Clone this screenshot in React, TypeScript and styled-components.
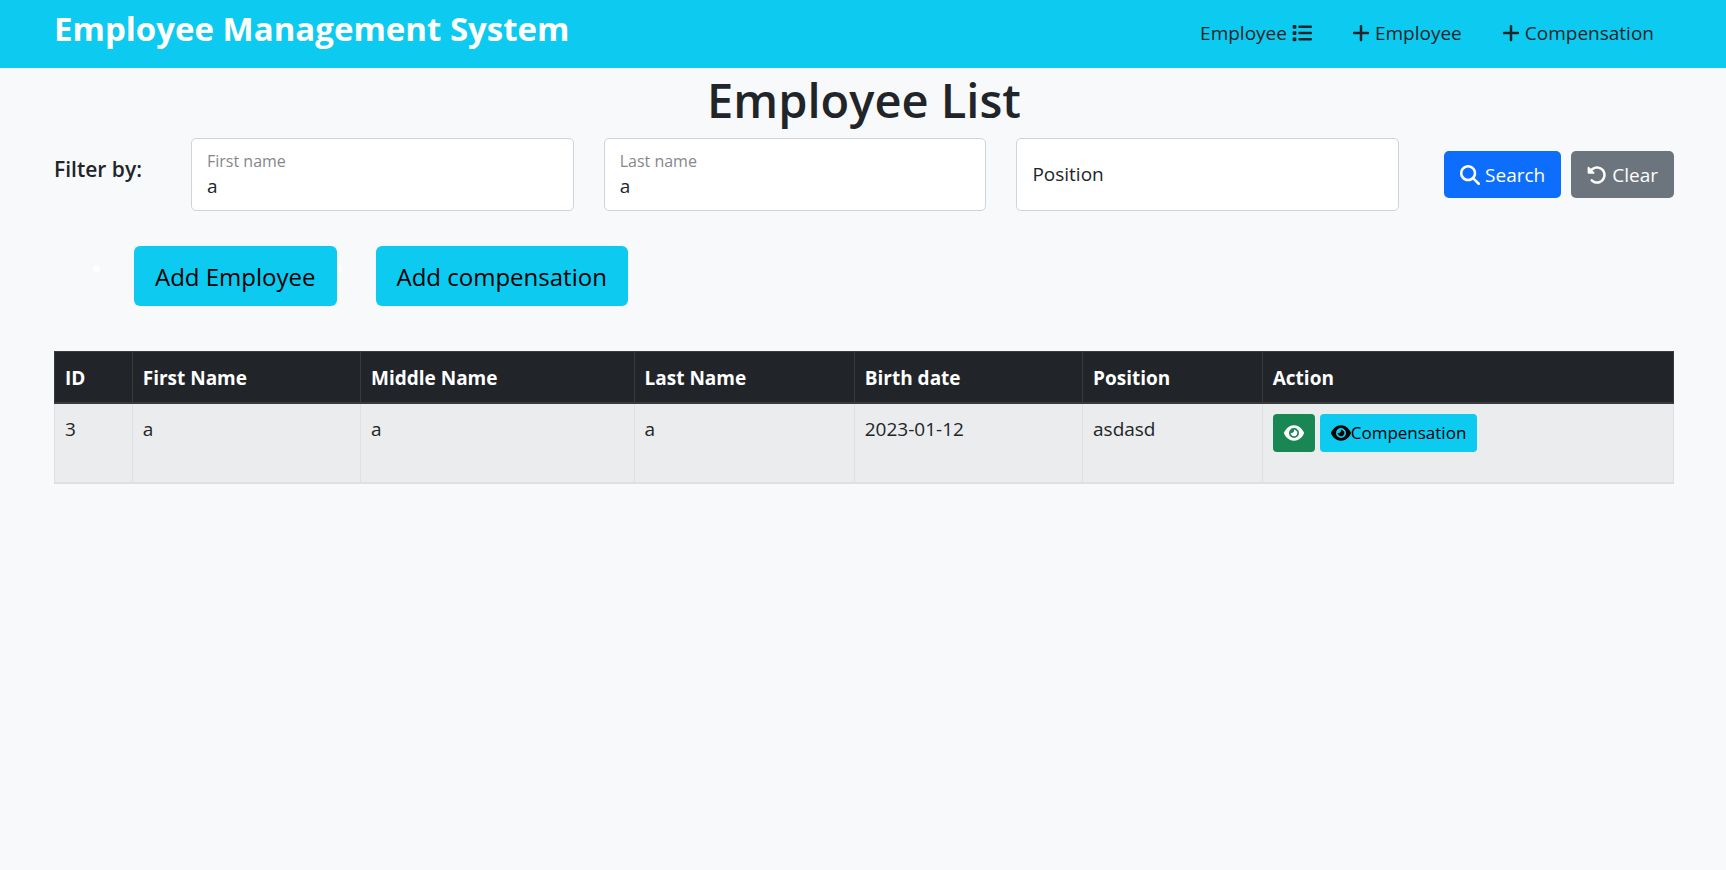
import React, { useState } from "react";
import styled, { createGlobalStyle, css } from "styled-components";
import { FaEye, FaList, FaMagnifyingGlass, FaPlus, FaRotateLeft } from "react-icons/fa6";

const GlobalStyle = createGlobalStyle`
  *, *::before, *::after { box-sizing: border-box; }
  body {
    margin: 0;
    background: #f8f9fb;
    color: #212529;
    font-family: "Segoe UI", "Open Sans", "Noto Sans", sans-serif;
    font-size: 19px;
    line-height: 30px;
  }
  button, input { font: inherit; }
`;

const Navbar = styled.header`
  display: flex;
  justify-content: space-between;
  align-items: flex-start;
  height: 68px;
  padding: 0 52px 0 54px;
  background: #0dcaf0;
`;

const Brand = styled.a`
  padding-top: 8px;
  color: #fff;
  font-size: 33px;
  font-weight: 700;
  line-height: 42px;
  text-decoration: none;
  white-space: nowrap;
`;

const NavLinks = styled.nav`
  display: flex;
  padding-top: 18px;
`;

const NavLink = styled.a`
  display: flex;
  align-items: center;
  gap: 5px;
  padding: 0 20px;
  color: #212529;
  text-decoration: none;
  white-space: nowrap;
`;

const PlusIcon = styled(FaPlus)`
  width: 18px;
  height: 20px;
`;

const Main = styled.main`
  padding: 0 52px 0 54px;
`;

const Title = styled.h1`
  margin: 0;
  padding: 2px 0 8px;
  font-size: 47px;
  font-weight: 600;
  line-height: 60px;
  text-align: center;
`;

const Filters = styled.form`
  display: flex;
  align-items: center;
`;

const FiltersHeading = styled.h2`
  flex: 0 0 137px;
  margin: 0;
  padding-bottom: 12px;
  font-size: 21px;
  font-weight: 600;
  line-height: 30px;
`;

const Fields = styled.div`
  display: flex;
  flex: 1;
  gap: 30px;
`;

const Field = styled.label`
  display: flex;
  flex: 1;
  flex-direction: column;
  justify-content: center;
  height: 73px;
  min-width: 0;
  padding: 0 15px 1px;
  background: #fff;
  border: 1px solid #ced4da;
  border-radius: 5px;
`;

const Caption = styled.span`
  color: #85888b;
  font-size: 16px;
  line-height: 24px;
`;

const Input = styled.input`
  width: 100%;
  height: 26px;
  padding: 0;
  background: transparent;
  border: 0;
  outline: 0;
  color: #212529;
  &::placeholder { color: #212529; opacity: 1; }
`;

const Actions = styled.div`
  display: flex;
  gap: 10px;
  padding-left: 45px;
`;

type Tone = "primary" | "secondary" | "success" | "info";

const tones: Record<Tone, ReturnType<typeof css>> = {
  primary: css`background: #0d6efd; color: #fff;`,
  secondary: css`background: #6c757d; color: #fff;`,
  success: css`background: #198754; color: #fff;`,
  info: css`background: #0dcaf0; color: #000;`,
};

const Button = styled.button<{ $tone: Tone }>`
  display: inline-flex;
  align-items: center;
  justify-content: center;
  gap: 5px;
  height: 47px;
  padding: 0 16px;
  border: 0;
  border-radius: 5px;
  cursor: pointer;
  white-space: nowrap;
  ${({ $tone }) => tones[$tone]}
`;

const SmallButton = styled(Button)`
  gap: 0;
  height: 38px;
  padding: 0 11px;
  border-radius: 4px;
  font-size: 17px;
`;

const LargeButton = styled(Button)`
  height: 60px;
  padding: 2px 21px 0;
  border-radius: 6px;
  font-size: 24px;
`;

const Shortcuts = styled.ul`
  display: flex;
  gap: 39px;
  margin: 0;
  padding: 35px 0 45px 80px;
  list-style: none;
`;

const Shortcut = styled.li`
  position: relative;
  &::before {
    content: "";
    position: absolute;
    z-index: -1;
    top: 19px;
    left: -41px;
    width: 7px;
    height: 7px;
    border-radius: 50%;
    background: #fff;
  }
`;

const Table = styled.table`
  width: 100%;
  border-collapse: collapse;
  table-layout: fixed;
`;

const Col = styled.col<{ $share: number }>`
  width: ${({ $share }) => $share}%;
`;

const HeadCell = styled.th`
  height: 51px;
  padding: 2px 10px 0;
  background: #212529;
  border: 1px solid #373b3e;
  border-bottom-width: 2px;
  color: #fff;
  font-weight: 700;
  text-align: left;
`;

const Cell = styled.td`
  height: 80px;
  padding: 10px 10px 0;
  background: #ebeced;
  border: 1px solid #dee0e6;
  border-bottom-width: 2px;
  vertical-align: top;
`;

const RowActions = styled.div`
  display: flex;
  gap: 5px;
`;

const columns = [
  { name: "ID", share: 4.8 },
  { name: "First Name", share: 14.1 },
  { name: "Middle Name", share: 16.9 },
  { name: "Last Name", share: 13.6 },
  { name: "Birth date", share: 14.1 },
  { name: "Position", share: 11.1 },
  { name: "Action", share: 25.4 },
];

const employees = [
  { id: 3, first: "a", middle: "a", last: "a", birth: "2023-01-12", position: "asdasd" },
];

const emptyFilters = { "First name": "", "Last name": "", Position: "" };
type FilterName = keyof typeof emptyFilters;

export default function App() {
  const [filters, setFilters] = useState({ ...emptyFilters, "First name": "a", "Last name": "a" });

  return (
    <>
      <GlobalStyle />
      <Navbar>
        <Brand href="#">Employee Management System</Brand>
        <NavLinks>
          <NavLink href="#list">Employee <FaList size={20} /></NavLink>
          <NavLink href="#add-employee"><PlusIcon /> Employee</NavLink>
          <NavLink href="#add-compensation"><PlusIcon /> Compensation</NavLink>
        </NavLinks>
      </Navbar>
      <Main>
        <Title>Employee List</Title>
        <Filters onSubmit={(e) => e.preventDefault()}>
          <FiltersHeading>Filter by:</FiltersHeading>
          <Fields>
            {(Object.keys(filters) as FilterName[]).map((name) => (
              <Field key={name}>
                {filters[name] && <Caption>{name}</Caption>}
                <Input
                  aria-label={name}
                  placeholder={name}
                  value={filters[name]}
                  onChange={(e) => setFilters({ ...filters, [name]: e.target.value })}
                />
              </Field>
            ))}
          </Fields>
          <Actions>
            <Button $tone="primary" type="submit"><FaMagnifyingGlass size={20} /> Search</Button>
            <Button $tone="secondary" type="button" onClick={() => setFilters(emptyFilters)}>
              <FaRotateLeft size={20} /> Clear
            </Button>
          </Actions>
        </Filters>
        <Shortcuts>
          <Shortcut><LargeButton $tone="info" type="button">Add Employee</LargeButton></Shortcut>
          <Shortcut><LargeButton $tone="info" type="button">Add compensation</LargeButton></Shortcut>
        </Shortcuts>
        <Table>
          <colgroup>
            {columns.map((c) => <Col key={c.name} $share={c.share} />)}
          </colgroup>
          <thead>
            <tr>{columns.map((c) => <HeadCell key={c.name} scope="col">{c.name}</HeadCell>)}</tr>
          </thead>
          <tbody>
            {employees.map((e) => (
              <tr key={e.id}>
                <Cell>{e.id}</Cell>
                <Cell>{e.first}</Cell>
                <Cell>{e.middle}</Cell>
                <Cell>{e.last}</Cell>
                <Cell>{e.birth}</Cell>
                <Cell>{e.position}</Cell>
                <Cell>
                  <RowActions>
                    <SmallButton $tone="success" type="button" aria-label="View employee"><FaEye size={20} /></SmallButton>
                    <SmallButton $tone="info" type="button"><FaEye size={20} />Compensation</SmallButton>
                  </RowActions>
                </Cell>
              </tr>
            ))}
          </tbody>
        </Table>
      </Main>
    </>
  );
}
